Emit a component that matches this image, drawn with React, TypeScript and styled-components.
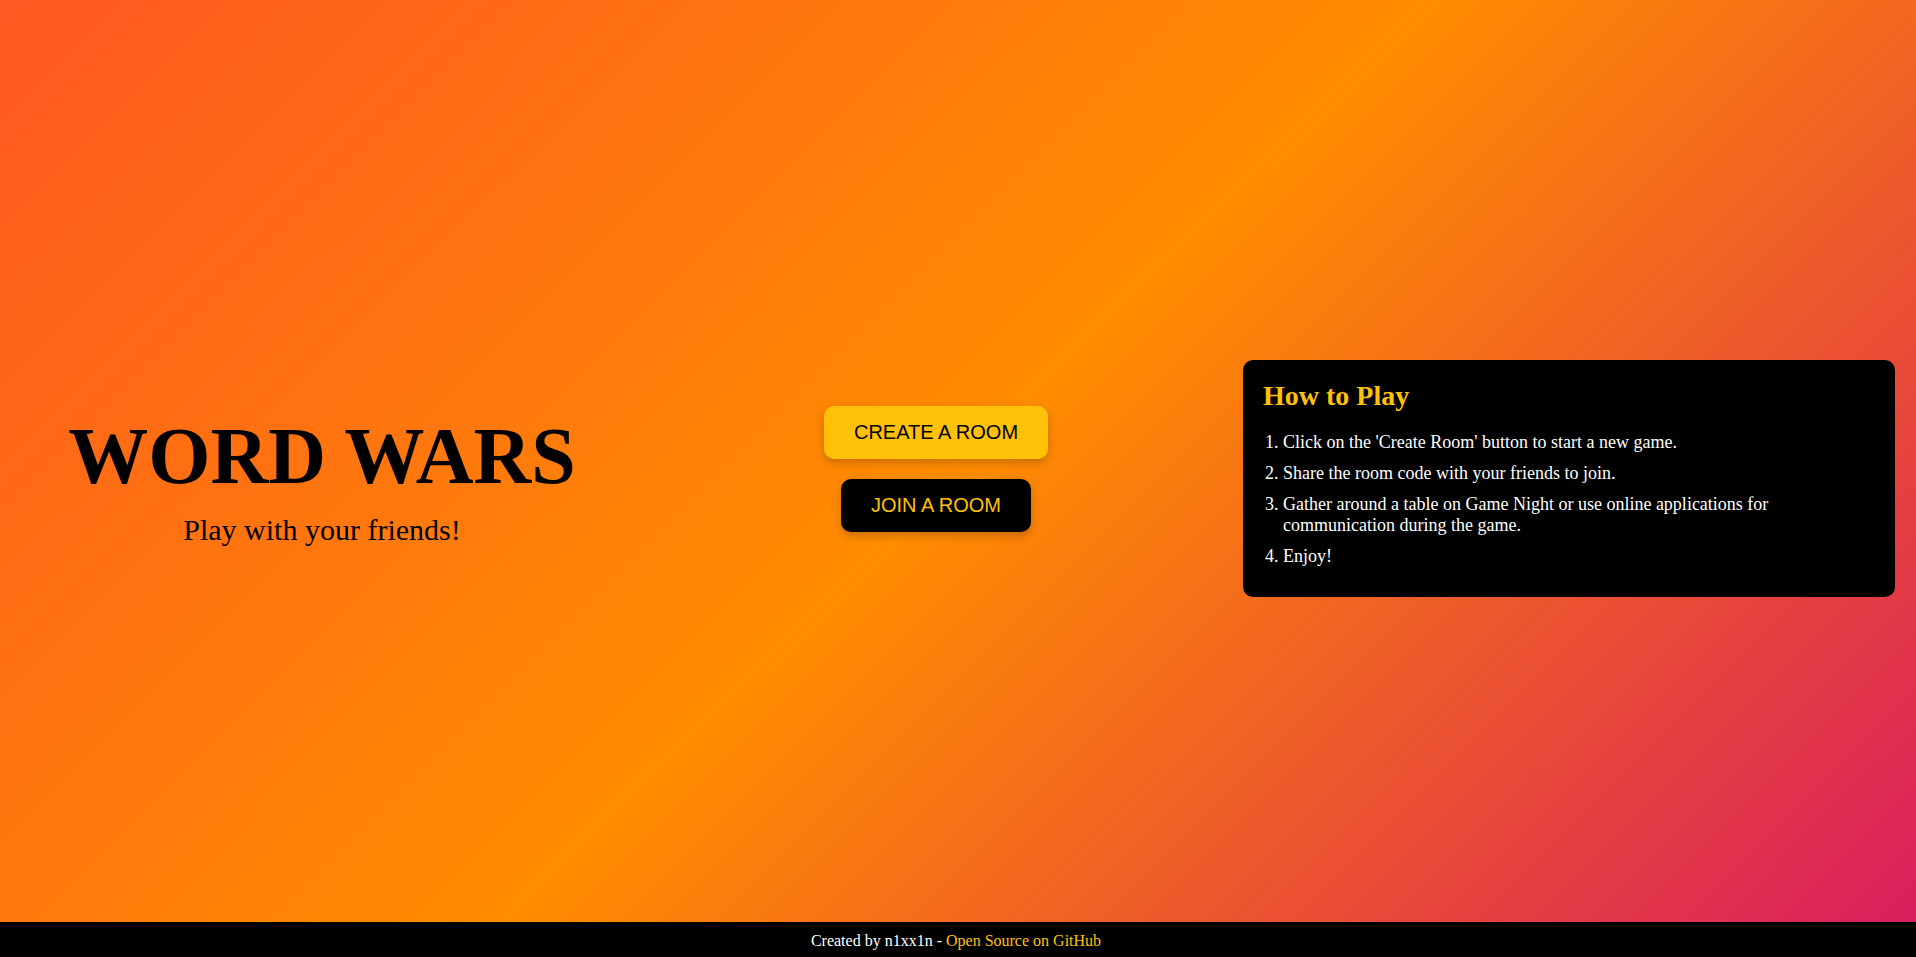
import React from "react";
import styled, { createGlobalStyle } from "styled-components";

const GlobalStyle = createGlobalStyle`
  html, body {
    margin: 0;
    padding: 0;
  }
  body {
    font-family: "Liberation Serif", "Times New Roman", serif;
    background: #000;
  }
`;

const Page = styled.main`
  min-height: 100vh;
  box-sizing: border-box;
  display: grid;
  grid-template-columns: 614px 1fr 652px;
  align-items: center;
  padding: 0 21px 0 15px;
  background: linear-gradient(135deg, #ff5722 0%, #ff8c00 50%, #d81b60 100%);
`;

const Hero = styled.section`
  display: flex;
  flex-direction: column;
  align-items: center;
  text-align: center;
`;

const Title = styled.h1`
  margin: 0;
  font-size: 80px;
  font-weight: 700;
  color: #000;
  line-height: normal;
`;

const Tagline = styled.p`
  margin: 11px 0 0;
  font-size: 30px;
  color: #000;
`;

const Actions = styled.section`
  display: flex;
  flex-direction: column;
  align-items: center;
`;

const Button = styled.button<{ $variant: "primary" | "dark" }>`
  margin: 0 0 20px;
  padding: 15px 30px;
  border: none;
  border-radius: 10px;
  font-family: "Liberation Sans", Arial, sans-serif;
  font-size: 20px;
  line-height: normal;
  cursor: pointer;
  box-shadow: 0 4px 8px rgba(0, 0, 0, 0.2);
  background: ${(p) => (p.$variant === "primary" ? "#ffc107" : "#000")};
  color: ${(p) => (p.$variant === "primary" ? "#000" : "#ffc107")};
`;

const Panel = styled.aside`
  background: #000;
  border-radius: 10px;
  padding: 20px;
  color: #fff;
`;

const PanelTitle = styled.h2`
  margin: 0 0 20px;
  font-size: 28px;
  font-weight: 700;
  color: #ffc107;
  line-height: normal;
`;

const Steps = styled.ol`
  margin: 0;
  padding-left: 20px;
`;

const Step = styled.li`
  font-size: 18px;
  line-height: normal;
  margin-bottom: 10px;
`;

const Footer = styled.footer`
  position: fixed;
  left: 0;
  right: 0;
  bottom: 0;
  background: #000;
  color: #fff;
  text-align: center;
  font-size: 16px;
  line-height: 19px;
  padding: 9px 4px 7px 0;
`;

const FooterLink = styled.a`
  color: #ffc107;
  text-decoration: none;
`;

export default function App() {
  return (
    <>
      <GlobalStyle />
      <Page>
        <Hero>
          <Title>WORD WARS</Title>
          <Tagline>Play with your friends!</Tagline>
        </Hero>
        <Actions>
          <Button $variant="primary">CREATE A ROOM</Button>
          <Button $variant="dark">JOIN A ROOM</Button>
        </Actions>
        <Panel>
          <PanelTitle>How to Play</PanelTitle>
          <Steps>
            <Step>Click on the 'Create Room' button to start a new game.</Step>
            <Step>Share the room code with your friends to join.</Step>
            <Step>
              Gather around a table on Game Night or use online applications for
              communication during the game.
            </Step>
            <Step>Enjoy!</Step>
          </Steps>
        </Panel>
      </Page>
      <Footer>
        Created by n1xx1n - <FooterLink href="#">Open Source on GitHub</FooterLink>
      </Footer>
    </>
  );
}
